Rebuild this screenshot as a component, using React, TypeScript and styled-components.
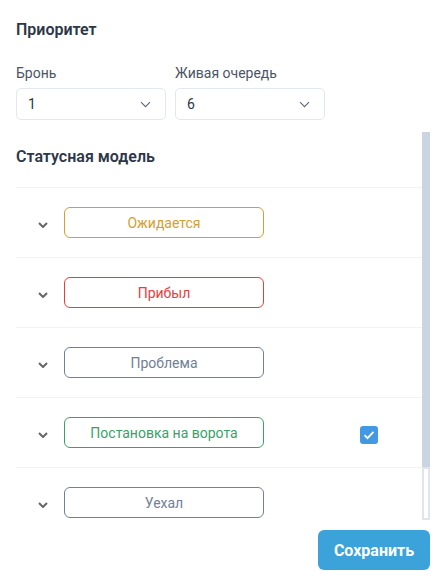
import React from 'react'
import styled, { createGlobalStyle } from 'styled-components'

const GlobalStyle = createGlobalStyle`
    body {
        margin: 0;
        background: #fff;
        font-family: Roboto, "Noto Sans", sans-serif;
    }
`

const Page = styled.div`
    width: 434px;
    height: 579px;
    box-sizing: border-box;
    padding: 20px 4px 0 16px;
    display: flex;
    flex-direction: column;
`

const Heading = styled.h3`
    margin: 0;
    font-size: 16px;
    font-weight: 600;
    line-height: 20px;
    color: #2d3748;
`

const Fields = styled.div`
    display: grid;
    grid-template-columns: 150px 150px;
    gap: 9px;
    margin-top: 24px;
`

const Field = styled.div`
    display: flex;
    flex-direction: column;
    gap: 6px;
`

const Label = styled.span`
    font-size: 14px;
    line-height: 18px;
    color: #4a5568;
`

const SelectBox = styled.div`
    height: 32px;
    box-sizing: border-box;
    border: 1px solid #e2e8f0;
    border-radius: 5px;
    display: flex;
    align-items: center;
    justify-content: space-between;
    padding: 0 14px 0 11px;
    font-size: 14px;
    color: #2d3748;
`

const Panel = styled.div`
    margin-top: 12px;
    height: 388px;
    display: flex;
`

const PanelContent = styled.div`
    flex: 1;
    overflow: hidden;
    padding-top: 15px;
`

const ScrollBar = styled.div`
    width: 8px;
    display: flex;
    flex-direction: column;
`

const ScrollThumb = styled.div`
    height: 335px;
    background: #cbd5e1;
`

const ScrollTrack = styled.div`
    flex: 1;
    background: #fff;
    box-shadow: inset 0 0 0 2px #dfe5ec;
`

const List = styled.div`
    margin-top: 20px;
    display: flex;
    flex-direction: column;
`

const Row = styled.div`
    height: 70px;
    flex-shrink: 0;
    box-sizing: border-box;
    border-top: 1px solid #f2f2f2;
    display: flex;
    align-items: center;
    padding-left: 22px;
`

const Toggle = styled.span`
    display: flex;
    width: 10px;
    margin-right: 16px;
    margin-top: 4px;
`

const Badge = styled.div<{ $color: string }>`
    width: 200px;
    height: 31px;
    box-sizing: border-box;
    border: 1px solid ${p => p.$color};
    border-radius: 6px;
    color: ${p => p.$color};
    font-size: 14px;
    display: flex;
    align-items: center;
    justify-content: center;
`

const Check = styled.span`
    width: 18px;
    height: 18px;
    margin-left: 96px;
    margin-top: 4px;
    border-radius: 3px;
    background: #4299e1;
    display: flex;
    align-items: center;
    justify-content: center;
`

const Footer = styled.div`
    display: flex;
    justify-content: flex-end;
    margin-top: 10px;
`

const SaveButton = styled.button`
    width: 112px;
    height: 40px;
    border: none;
    border-radius: 6px;
    background: #3ba3d9;
    color: #fff;
    font-family: Roboto, sans-serif;
    font-size: 16px;
    font-weight: 700;
`

const SelectChevron = () => (
    <svg width="11" height="7" viewBox="0 0 11 7" fill="none">
        <path d="M1 1.2l4.5 4.5 4.5-4.5" stroke="#5a6678" strokeWidth="1.1" />
    </svg>
)

const RowChevron = () => (
    <svg width="10" height="6" viewBox="0 0 10 6" fill="none">
        <path d="M1 1l4 4 4-4" stroke="#666" strokeWidth="2" />
    </svg>
)

const statuses = [
    { name: 'Ожидается', color: '#d69e2e', checked: false },
    { name: 'Прибыл', color: '#e53e3e', checked: false },
    { name: 'Проблема', color: '#718096', checked: false },
    { name: 'Постановка на ворота', color: '#38a169', checked: true },
    { name: 'Уехал', color: '#718096', checked: false },
]

const App = () => {
    return (
        <>
            <GlobalStyle />
            <Page>
                <Heading>Приоритет</Heading>
                <Fields>
                    <Field>
                        <Label>Бронь</Label>
                        <SelectBox>1<SelectChevron /></SelectBox>
                    </Field>
                    <Field>
                        <Label>Живая очередь</Label>
                        <SelectBox>6<SelectChevron /></SelectBox>
                    </Field>
                </Fields>
                <Panel>
                    <PanelContent>
                        <Heading>Статусная модель</Heading>
                        <List>
                            {statuses.map((s, i) => (
                                <Row key={i}>
                                    <Toggle><RowChevron /></Toggle>
                                    <Badge $color={s.color}>{s.name}</Badge>
                                    {s.checked && (
                                        <Check>
                                            <svg width="12" height="10" viewBox="0 0 12 10" fill="none">
                                                <path d="M1.5 5.2l3 3L10.5 1.8" stroke="#fff" strokeWidth="1.8" />
                                            </svg>
                                        </Check>
                                    )}
                                </Row>
                            ))}
                        </List>
                    </PanelContent>
                    <ScrollBar>
                        <ScrollThumb />
                        <ScrollTrack />
                    </ScrollBar>
                </Panel>
                <Footer>
                    <SaveButton>Сохранить</SaveButton>
                </Footer>
            </Page>
        </>
    )
}

export default App
